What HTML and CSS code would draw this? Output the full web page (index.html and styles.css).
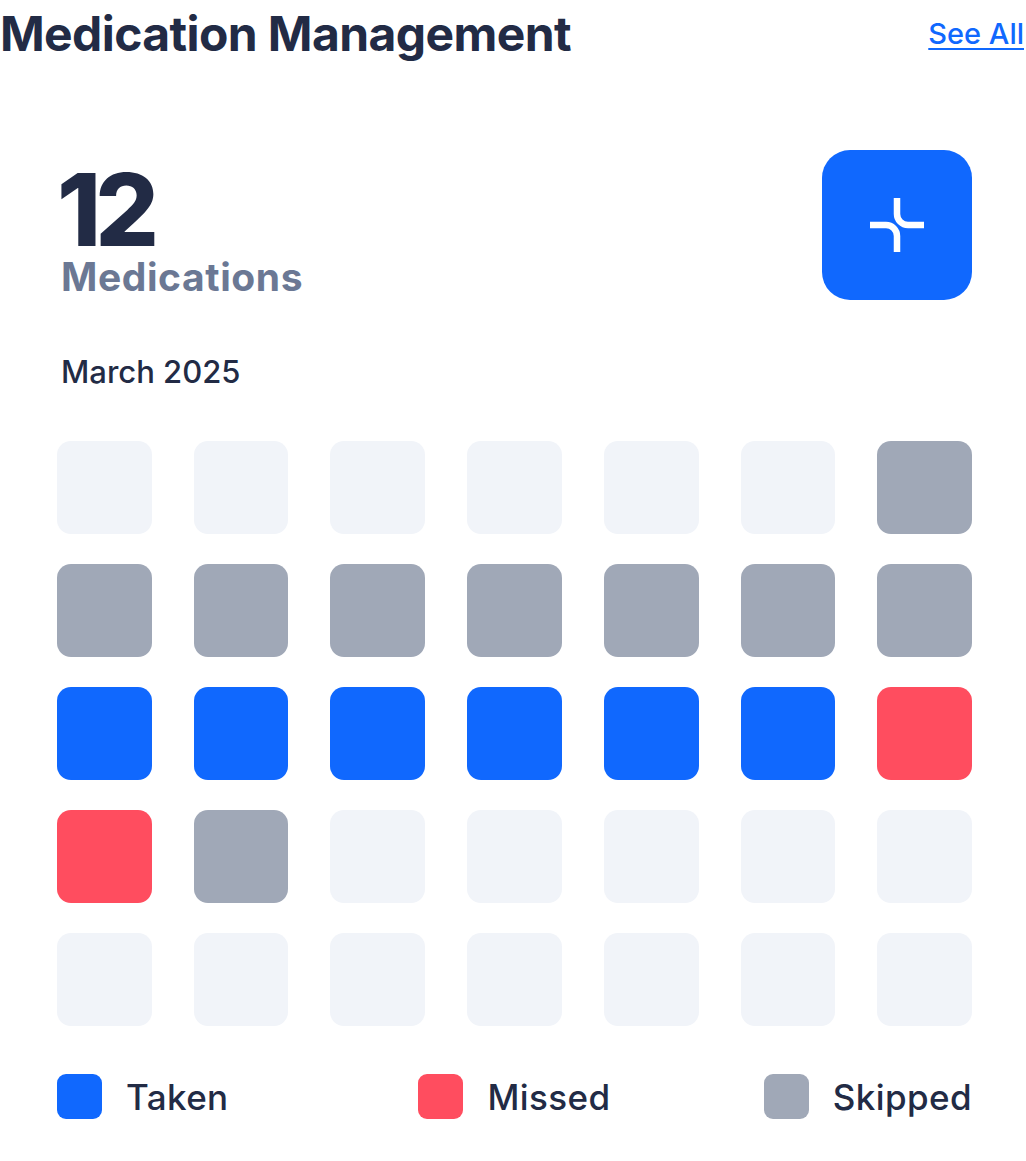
FILE: index.html
```html
<!DOCTYPE html>
<html lang="en">
<head>
<meta charset="utf-8">
<title>Medication Management</title>
<link rel="stylesheet" href="styles.css">
</head>
<body>
<section class="widget">
  <header class="widget-head">
    <h1 class="title">Medication Management</h1>
    <a class="see-all" href="#">See All</a>
  </header>
  <div class="card">
    <div class="summary">
      <div class="count">
        <div class="count-num">12</div>
        <div class="count-label">Medications</div>
      </div>
      <button class="add-btn" type="button" aria-label="Add medication">
        <svg width="54" height="54" viewBox="0 0 54 54" fill="none" stroke="#fff" stroke-width="6.5">
          <path d="M27 0 V16 A11 11 0 0 0 38 27 H54"/>
          <path d="M0 27 H16 A11 11 0 0 1 27 38 V54"/>
        </svg>
      </button>
    </div>
    <div class="month">March 2025</div>
    <div class="grid">
      <div class="cell empty"></div><div class="cell empty"></div><div class="cell empty"></div><div class="cell empty"></div><div class="cell empty"></div><div class="cell empty"></div><div class="cell skipped"></div>
      <div class="cell skipped"></div><div class="cell skipped"></div><div class="cell skipped"></div><div class="cell skipped"></div><div class="cell skipped"></div><div class="cell skipped"></div><div class="cell skipped"></div>
      <div class="cell taken"></div><div class="cell taken"></div><div class="cell taken"></div><div class="cell taken"></div><div class="cell taken"></div><div class="cell taken"></div><div class="cell missed"></div>
      <div class="cell missed"></div><div class="cell skipped"></div><div class="cell empty"></div><div class="cell empty"></div><div class="cell empty"></div><div class="cell empty"></div><div class="cell empty"></div>
      <div class="cell empty"></div><div class="cell empty"></div><div class="cell empty"></div><div class="cell empty"></div><div class="cell empty"></div><div class="cell empty"></div><div class="cell empty"></div>
    </div>
    <div class="legend">
      <div class="legend-item"><span class="swatch taken"></span><span class="legend-text">Taken</span></div>
      <div class="legend-item legend-mid"><span class="swatch missed"></span><span class="legend-text">Missed</span></div>
      <div class="legend-item legend-end"><span class="swatch skipped"></span><span class="legend-text">Skipped</span></div>
    </div>
  </div>
</section>
</body>
</html>
```
FILE: styles.css
```css
html, body {
  margin: 0;
  padding: 0;
  background: #ffffff;
}
body {
  font-family: Inter, "Noto Sans", sans-serif;
  color: #222b45;
}
.widget {
  width: 1026px;
}
.widget-head {
  display: flex;
  justify-content: space-between;
  align-items: flex-start;
  padding: 0 2px 0 0;
}
.title {
  margin: 0;
  font-size: 48px;
  line-height: 68px;
  font-weight: 700;
  letter-spacing: -0.6px;
  color: #222b45;
}
.see-all {
  margin-top: 14px;
  font-size: 29px;
  line-height: 40px;
  font-weight: 500;
  color: #1068fe;
  text-decoration: underline;
  text-underline-offset: 4px;
  text-decoration-thickness: 2px;
}
.card {
  padding: 82px 54px 0 57px;
}
.summary {
  display: flex;
  justify-content: space-between;
  align-items: flex-start;
  height: 150px;
}
.count {
  padding-top: 20px;
}
.count-num {
  font-size: 100px;
  font-weight: 800;
  line-height: 80px;
  letter-spacing: -6px;
  color: #222b45;
}
.count-label {
  font-size: 39px;
  font-weight: 700;
  line-height: 40px;
  letter-spacing: 0.6px;
  color: #6b7894;
  padding-left: 4px;
  margin-top: 7px;
}
.add-btn {
  flex: none;
  width: 150px;
  height: 150px;
  border: none;
  border-radius: 28px;
  background: #1068fe;
  display: flex;
  align-items: center;
  justify-content: center;
  padding: 0;
}
.month {
  margin-top: 50px;
  padding-left: 4px;
  font-size: 31px;
  font-weight: 500;
  line-height: 44px;
  color: #222b45;
}
.grid {
  margin-top: 47px;
  display: grid;
  grid-template-columns: repeat(7, 1fr);
  grid-auto-rows: 93px;
  column-gap: 42px;
  row-gap: 30px;
}
.cell {
  border-radius: 14px;
}
.empty { background: #f1f4f9; }
.skipped { background: #a0a8b7; }
.taken { background: #1068fe; }
.missed { background: #ff4d5f; }
.legend {
  margin-top: 48px;
  display: grid;
  grid-template-columns: repeat(3, 1fr);
  align-items: center;
}
.legend-item {
  display: flex;
  align-items: center;
  gap: 24px;
  justify-self: start;
}
.legend-mid {
  justify-self: center;
}
.legend-end {
  justify-self: end;
}
.swatch {
  width: 45px;
  height: 45px;
  border-radius: 9px;
}
.legend-text {
  font-size: 35px;
  font-weight: 500;
  letter-spacing: 0.4px;
  color: #222b45;
}
```
